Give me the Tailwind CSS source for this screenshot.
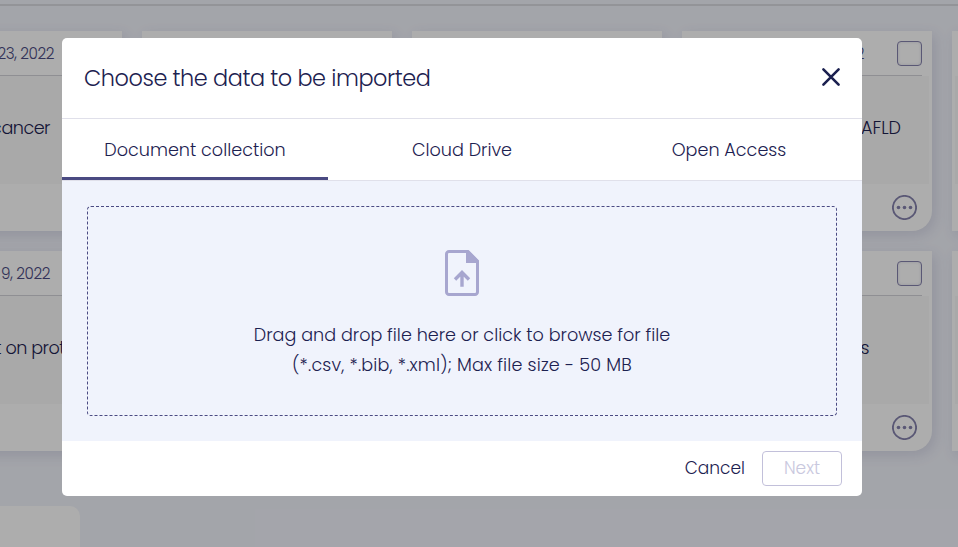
<!DOCTYPE html>
<html lang="en">
<head>
<meta charset="utf-8">
<title>Import data</title>
<script src="https://cdn.jsdelivr.net/npm/@tailwindcss/browser@4"></script>
</head>
<body class="font-['Poppins','Inter',sans-serif] font-light">
<div class="relative w-[958px] h-[547px] overflow-hidden bg-[#f1f3fb] text-[#1c2150]">
  <header class="h-[6px] border-b-2 border-[#d9dae1]"></header>
  <main id="cards" class="mt-[25px] -ml-[128px] w-[1350px] grid grid-cols-[repeat(5,250px)] gap-5"></main>
  <section class="mt-[55px] h-[60px] w-[80px] rounded-tr-[10px] bg-white"></section>

  <div class="absolute inset-0 bg-black/32"></div>

  <div role="dialog" class="absolute left-[62px] top-[38px] w-[800px] h-[458px] rounded-[5px] overflow-hidden bg-white flex flex-col">
    <div class="h-[81px] shrink-0 border-b border-[#e0e0ea] pl-[22px] pr-[21px] flex items-center justify-between">
      <h1 class="text-[22.4px] leading-8 whitespace-nowrap tracking-[-0.44px]">Choose the data to be imported</h1>
      <svg class="w-5 h-5 -mt-[2px]" viewBox="0 0 20 20" fill="none" stroke="#1c2150" stroke-width="2.6" stroke-linecap="round"><path d="M2.4 2.4 17.6 17.6M17.6 2.4 2.4 17.6"/></svg>
    </div>
    <nav class="h-[62px] shrink-0 border-b border-[#e0e0ea] grid grid-cols-[266px_268px_266px] text-[17.6px] text-center whitespace-nowrap">
      <div class="border-b-[3px] border-[#4a4a82] pt-[17px] leading-7">Document collection</div>
      <div class="pt-[17px] leading-7">Cloud Drive</div>
      <div class="pt-[17px] leading-7">Open Access</div>
    </nav>
    <div class="h-[260px] shrink-0 bg-[#f0f3fc] p-[25px]">
      <div class="h-[210px] border border-dashed border-[#4a4a82] rounded-[4px] flex flex-col items-center pt-[43px]">
        <svg class="w-[34px] h-[46px] shrink-0" viewBox="0 0 34 46">
          <path d="M4 1.5H23L32.5 11V42a2.5 2.5 0 0 1-2.5 2.5H4A2.5 2.5 0 0 1 1.5 42V4A2.5 2.5 0 0 1 4 1.5Z" fill="none" stroke="#a7a6cf" stroke-width="3"/>
          <path d="M21 1H24L33.5 10.5V13H21Z" fill="#a7a6cf"/>
          <path d="M17 36.800V23M10 29.500 17 22.500 24 29.500" fill="none" stroke="#a7a6cf" stroke-width="3.400"/>
        </svg>
        <p class="mt-[24px] text-[17.6px] leading-[30px] text-center whitespace-nowrap">Drag and drop file here or click to browse for file<br><span class="tracking-[0.17px]">(*.csv, *.bib, *.xml); Max file size - 50 MB</span></p>
      </div>
    </div>
    <footer class="flex-1 pr-5 flex items-center justify-end">
      <button class="text-[17px] mr-[17px]">Cancel</button>
      <button class="w-20 h-[35px] rounded-[4px] border border-[#c2c0da] text-[17px] text-[#c9c8de]">Next</button>
    </footer>
  </div>
</div>
<script>
const cards = [
  {date:'June 23, 2022', title:'cancer', end:'w-[178px]', dend:'w-[182px]'}, {}, {},
  {date:'June 12, 2022', title:'NAFLD', end:'w-[219px]', dend:'w-[182px]', track:'tracking-[0px]'}, {},
  {date:'June 9, 2022', title:'Effect on prot', end:'w-[193px]', dend:'w-[178px]'}, {}, {},
  {date:'', title:'analysis', end:'w-[187px]', dend:'w-[178px]'}, {}
];
document.getElementById('cards').innerHTML = cards.map(c => `
  <article class="h-[200px] bg-white rounded-br-[20px] shadow-[3px_4px_14px_rgba(60,60,110,0.14)] flex flex-col whitespace-nowrap">
    <div class="h-[45px] mx-[10px] border-b border-[#d3d3d9] flex items-center justify-between">
      <span class="${c.dend || 'w-[178px]'} pt-[2px] -ml-[10px] text-right text-[15.2px] tracking-[-0.4px] text-[#4a4a82]">${c.date || ''}</span>
      <span class="w-[25px] h-[25px] rounded-[4px] border border-[#8582ad] shadow-[inset_0_0_3px_rgba(80,80,130,0.2)]"></span>
    </div>
    <div class="h-[108px] mx-[3px] bg-[#f9f9f9] pt-[39px]">
      <div class="${c.end || 'w-[180px]'} ${c.track || 'tracking-[-0.5px]'} -ml-[3px] text-right text-[17.6px] leading-[27px]">${c.title || ''}</div>
    </div>
    <div class="flex-1 flex justify-end items-center pr-[15px]">
      <svg class="w-[25px] h-[25px]" viewBox="0 0 25 25" fill="#8582ad"><circle cx="12.5" cy="12.5" r="11.600" fill="none" stroke="#8582ad" stroke-width="1.900"/><circle cx="6.500" cy="12.5" r="1.800"/><circle cx="12.5" cy="12.5" r="1.800"/><circle cx="18.500" cy="12.5" r="1.800"/></svg>
    </div>
  </article>`).join('');
</script>
</body>
</html>
